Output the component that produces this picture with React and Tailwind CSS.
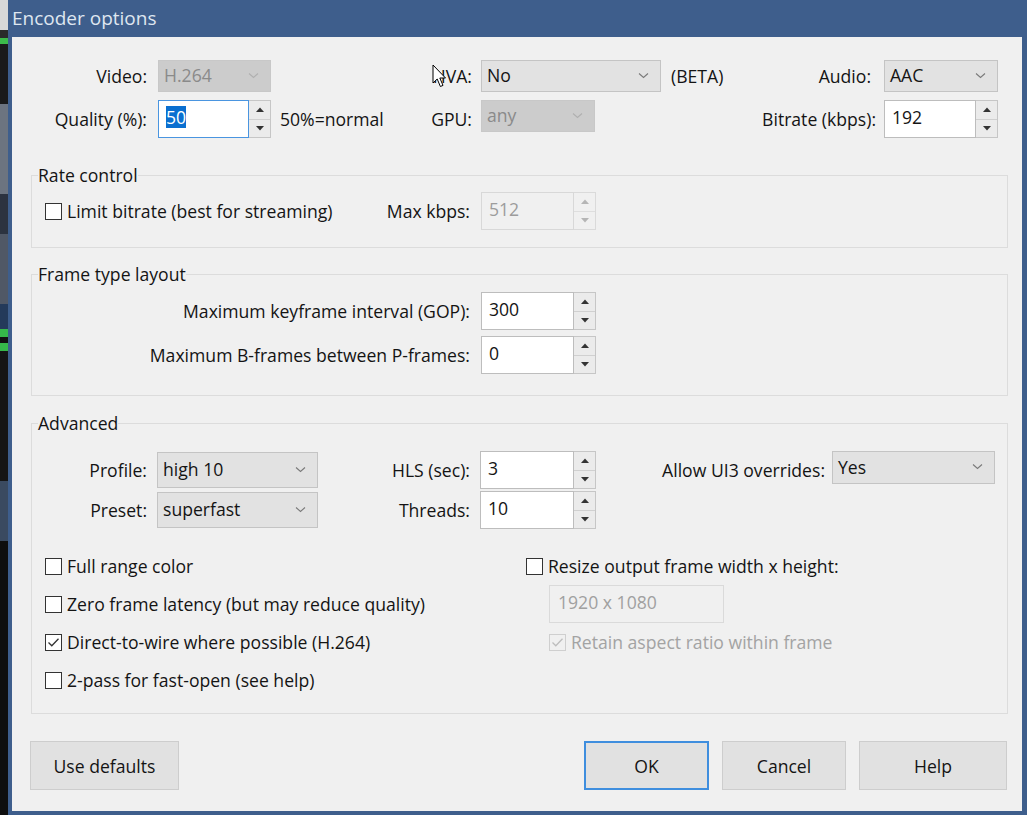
import React from "react";

const Chevron = ({ disabled }) => (
  <svg width="11" height="7" viewBox="0 0 11 7" className="shrink-0">
    <path d="M1 1.5 L5.5 5.5 L10 1.5" fill="none" stroke={disabled ? "#b0b0b0" : "#7a7a7a"} strokeWidth="1.1" />
  </svg>
);

const Up = ({ disabled }) => (
  <svg width="8" height="5" viewBox="0 0 8 5">
    <path d="M0 5 L4 0.5 L8 5 Z" fill={disabled ? "#b5b5b5" : "#333"} />
  </svg>
);
const Down = ({ disabled }) => (
  <svg width="8" height="5" viewBox="0 0 8 5">
    <path d="M0 0 L4 4.5 L8 0 Z" fill={disabled ? "#b5b5b5" : "#333"} />
  </svg>
);

function Combo({ w, h, value, disabled }) {
  return (
    <div
      className={`flex items-center justify-between pl-[5px] pr-[11px] pb-[2px] border ${
        disabled
          ? "bg-[#cccccc] border-[#c8c8c8] text-[#8a8a8a]"
          : "bg-[#e2e2e2] border-[#c4c4c4] text-[#141414]"
      } ${w} ${h}`}
    >
      <span>{value}</span>
      <Chevron disabled={disabled} />
    </div>
  );
}

function Spin({ w, value, disabled, focused, selected }) {
  return (
    <div className={`flex h-[38px] shrink-0 ${w}`}>
      <div
        className={`flex-1 flex items-center pl-[7px] pb-[4px] border ${
          focused ? "border-[#4a95e0]" : disabled ? "border-[#d8d8d8]" : "border-[#bdbdbd]"
        } ${disabled ? "bg-[#f0f0f0] text-[#9c9c9c]" : "bg-white text-[#141414]"}`}
      >
        {selected ? <span className="bg-[#0a6fd0] text-white leading-[22px]">{value}</span> : value}
      </div>
      <div
        className={`w-[22px] flex flex-col border border-l-0 ${
          disabled ? "border-[#dadada] bg-[#f0f0f0]" : "border-[#c6c6c6] bg-[#ebebeb]"
        }`}
      >
        <div className={`flex-1 flex items-center justify-center border-b ${disabled ? "border-[#dedede]" : "border-[#d0d0d0]"}`}>
          <Up disabled={disabled} />
        </div>
        <div className="flex-1 flex items-center justify-center">
          <Down disabled={disabled} />
        </div>
      </div>
    </div>
  );
}

const Check = ({ checked, disabled }) => (
  <div
    className={`w-[17px] h-[17px] shrink-0 border flex items-center justify-center ${
      disabled ? "border-[#cfcfcf] bg-[#f0f0f0]" : "border-[#333333] bg-white"
    }`}
  >
    {checked && (
      <svg width="13" height="11" viewBox="0 0 13 11">
        <path d="M1.5 5.5 L4.8 8.8 L11.5 1.8" fill="none" stroke={disabled ? "#bdbdbd" : "#333"} strokeWidth="1.3" />
      </svg>
    )}
  </div>
);

function CheckRow({ label, checked, disabled }) {
  return (
    <div className="flex items-center h-[38px] gap-[5px]">
      <Check checked={checked} disabled={disabled} />
      <span className={disabled ? "text-[#a3a3a3]" : "text-[#141414]"}>{label}</span>
    </div>
  );
}

function Group({ title, children, cls }) {
  return (
    <fieldset className={`ml-[19px] w-[977px] border border-[#dcdcdc] pl-[6px] pr-0 ${cls}`}>
      <legend className="px-0 leading-[22px] text-[#141414]">{title}</legend>
      {children}
    </fieldset>
  );
}

function Btn({ label, w, focus }) {
  return (
    <div
      className={`h-[49px] ${w} flex items-center justify-center pt-[1px] bg-[#e1e1e1] border ${
        focus ? "border-[#3f8ede] border-2" : "border-[#cdcdcd]"
      } text-[#141414]`}
    >
      {label}
    </div>
  );
}

export default function App() {
  return (
    <div className="relative w-[1027px] h-[815px] flex overflow-hidden bg-[#111] font-['Open_Sans','Noto_Sans',sans-serif] text-[17.6px] leading-[22px]">
      {/* background strip of another window */}
      <div className="w-[8px] flex flex-col shrink-0">
        <div className="h-[30px] bg-[#d8d8d8]" />
        <div className="h-[8px] bg-[#2a2a2a]" />
        <div className="h-[6px] bg-[#3cba4a]" />
        <div className="h-[60px] bg-[#1a1a1a]" />
        <div className="h-[90px] bg-[#6c7480]" />
        <div className="h-[40px] bg-[#2c3340]" />
        <div className="h-[70px] bg-[#505866]" />
        <div className="h-[25px] bg-[#243a5a]" />
        <div className="h-[8px] bg-[#36b84a]" />
        <div className="h-[6px] bg-[#111]" />
        <div className="h-[8px] bg-[#36b84a]" />
        <div className="h-[130px] bg-[#151515]" />
        <div className="h-[60px] bg-[#3a4a60]" />
        <div className="flex-1 bg-[#0e0e0e]" />
      </div>

      {/* window */}
      <div className="w-[1019px] h-[815px] flex flex-col bg-[#3e5e8c]">
        <div className="h-[37px] shrink-0 flex items-center pl-[4px] pb-[1px] text-[19px] text-[#dfe6f0]">
          Encoder options
        </div>
        <div className="ml-[4px] mr-[5px] h-[774px] shrink-0 bg-[#f0f0f0] text-[#141414] flex flex-col pt-[23px]">
          {/* row 1 */}
          <div className="flex items-center h-[32px]">
            <div className="w-[135px] text-right">Video:</div>
            <div className="ml-[11px]">
              <Combo w="w-[113px]" h="h-[32px]" value="H.264" disabled />
            </div>
            <div className="w-[201px] text-right">HVA:</div>
            <div className="ml-[9px]">
              <Combo w="w-[180px]" h="h-[32px]" value="No" />
            </div>
            <div className="w-[211px] flex justify-between pr-[1px]">
              <span className="ml-[10px]">(BETA)</span>
              <span>Audio:</span>
            </div>
            <div className="ml-[12px]">
              <Combo w="w-[114px]" h="h-[32px]" value="AAC" />
            </div>
          </div>

          {/* row 2 */}
          <div className="flex items-center h-[38px] mt-[8px]">
            <div className="w-[135px] text-right">Quality (%):</div>
            <div className="ml-[11px]">
              <Spin w="w-[113px]" value="50" focused selected />
            </div>
            <div className="w-[201px] flex justify-between">
              <span className="ml-[9px]">50%=normal</span>
              <span>GPU:</span>
            </div>
            <div className="ml-[9px] self-start">
              <Combo w="w-[114px]" h="h-[32px]" value="any" disabled />
            </div>
            <div className="w-[281px] text-right">Bitrate (kbps):</div>
            <div className="ml-[8px]">
              <Spin w="w-[114px]" value="192" />
            </div>
          </div>

          {/* Rate control */}
          <Group title="Rate control" cls="mt-[26px] pt-[6px] pb-[17px]">
            <div className="flex items-center h-[38px]">
              <div className="w-[432px] flex justify-between items-center">
                <div className="ml-[7px]">
                  <CheckRow label="Limit bitrate (best for streaming)" />
                </div>
                <span>Max kbps:</span>
              </div>
              <div className="ml-[11px]">
                <Spin w="w-[115px]" value="512" disabled />
              </div>
            </div>
          </Group>

          {/* Frame type layout */}
          <Group title="Frame type layout" cls="mt-[15px] pt-[7px] pb-[21px]">
            <div className="flex flex-col gap-[6px]">
              <div className="flex items-center h-[38px]">
                <div className="w-[432px] text-right">Maximum keyframe interval (GOP):</div>
                <div className="ml-[11px]">
                  <Spin w="w-[115px]" value="300" />
                </div>
              </div>
              <div className="flex items-center h-[38px]">
                <div className="w-[432px] text-right">Maximum B-frames between P-frames:</div>
                <div className="ml-[11px]">
                  <Spin w="w-[115px]" value="0" />
                </div>
              </div>
            </div>
          </Group>

          {/* Advanced */}
          <Group title="Advanced" cls="mt-[16px] pt-[17px] pb-[14px]">
            <div className="flex flex-col gap-[2px]">
              <div className="flex items-center h-[38px]">
                <div className="w-[109px] text-right">Profile:</div>
                <div className="ml-[10px]">
                  <Combo w="w-[161px]" h="h-[36px]" value="high 10" />
                </div>
                <div className="w-[152px] text-right">HLS (sec):</div>
                <div className="ml-[10px]">
                  <Spin w="w-[116px]" value="3" />
                </div>
                <div className="w-[229px] text-right">Allow UI3 overrides:</div>
                <div className="ml-[7px] self-start">
                  <Combo w="w-[163px]" h="h-[33px]" value="Yes" />
                </div>
              </div>
              <div className="flex items-center h-[38px]">
                <div className="w-[109px] text-right">Preset:</div>
                <div className="ml-[10px]">
                  <Combo w="w-[161px]" h="h-[36px]" value="superfast" />
                </div>
                <div className="w-[152px] text-right">Threads:</div>
                <div className="ml-[10px]">
                  <Spin w="w-[116px]" value="10" />
                </div>
              </div>
            </div>

            <div className="flex mt-[18px]">
              <div className="w-[488px] pl-[7px] flex flex-col">
                <CheckRow label="Full range color" />
                <CheckRow label="Zero frame latency (but may reduce quality)" />
                <CheckRow label="Direct-to-wire where possible (H.264)" checked />
                <CheckRow label="2-pass for fast-open (see help)" />
              </div>
              <div className="flex flex-col">
                <CheckRow label="Resize output frame width x height:" />
                <div className="ml-[23px] w-[175px] h-[38px] border border-[#dadada] bg-[#f0f0f0] text-[#a0a0a0] flex items-center pl-[8px] pb-[4px]">
                  1920 x 1080
                </div>
                <div className="ml-[23px]">
                  <CheckRow label="Retain aspect ratio within frame" checked disabled />
                </div>
              </div>
            </div>
          </Group>

          {/* buttons */}
          <div className="flex mt-[27px]">
            <div className="ml-[18px]">
              <Btn label="Use defaults" w="w-[149px]" />
            </div>
            <div className="ml-[405px] flex gap-[13px]">
              <Btn label="OK" w="w-[125px]" focus />
              <Btn label="Cancel" w="w-[124px]" />
              <Btn label="Help" w="w-[148px]" />
            </div>
          </div>
        </div>
      </div>

      {/* mouse cursor */}
      <svg className="absolute left-[432px] top-[64px]" width="16" height="25" viewBox="0 0 16 25">
        <path d="M1 1 L1 19 L5.2 15 L8.4 22.5 L11 21.4 L7.8 14 L13.5 14 Z" fill="#fff" stroke="#000" strokeWidth="1" strokeLinejoin="round" />
      </svg>
    </div>
  );
}
